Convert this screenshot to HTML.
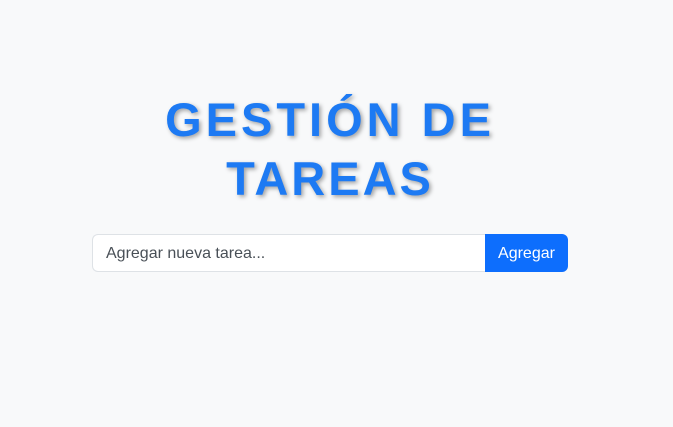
<!DOCTYPE html>
<html><head><meta charset="utf-8"><style>
html,body{margin:0;padding:0;background:#f8f9fa;width:673px;height:427px;overflow:hidden;font-family:"Liberation Sans",sans-serif;}
h1{position:absolute;left:92px;width:476px;top:90px;margin:0;text-align:center;font-size:47px;line-height:59px;font-weight:bold;letter-spacing:4px;color:#1d7af3;text-shadow:2px 2px 4px rgba(0,0,0,0.35);}
h1 span{letter-spacing:3px;}
.grp{position:absolute;left:92px;top:234px;width:476px;height:38px;display:flex;}
.inp{flex:1;box-sizing:border-box;height:38px;border:1px solid #dee2e6;border-right:none;border-radius:6px 0 0 6px;background:#fff;color:#495057;font-size:16px;line-height:38px;padding-left:13px;}
.btn{width:83px;height:38px;background:#0d6efd;color:#fff;font-size:16px;line-height:40px;text-align:center;border-radius:0 6px 6px 0;}
</style></head><body>
<h1>GESTIÓN DE<br><span>TAREAS</span></h1>
<div class="grp"><div class="inp">Agregar nueva tarea...</div><div class="btn">Agregar</div></div>
</body></html>
